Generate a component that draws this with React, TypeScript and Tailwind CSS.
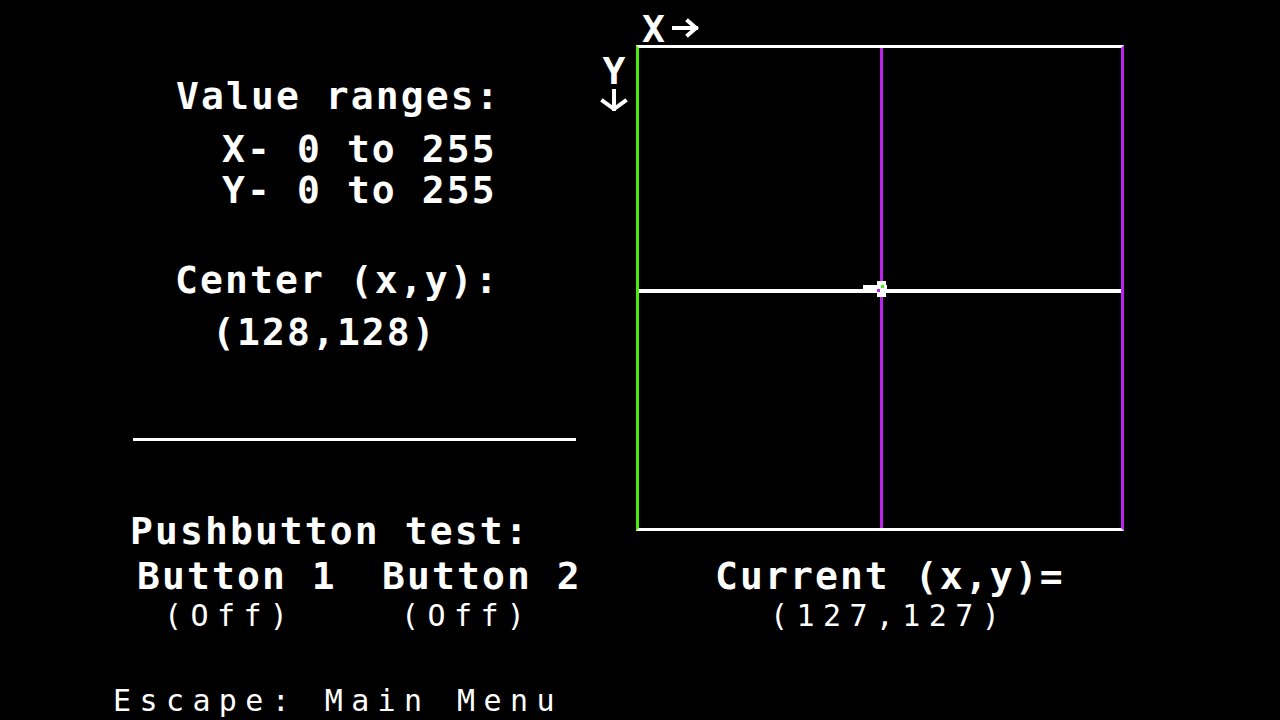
import React from "react";

const MONO = "font-['DejaVu_Sans_Mono','Liberation_Mono',monospace]";
const BOLD = `${MONO} font-bold text-[38px] leading-[36px] h-[36px] tracking-[2.1px] whitespace-pre text-white`;
const THIN = `${MONO} font-normal text-[30px] leading-[30px] h-[30px] tracking-[8.4px] whitespace-pre text-white`;

const GREEN = "border-l-[#44ee11]";

function RightArrow() {
  return (
    <svg width="28" height="20" viewBox="0 0 28 20" className="ml-[5px] mt-[7px]">
      <path d="M0 10 H24 M16 3 L24 10 L16 17" stroke="#fff" strokeWidth="4" fill="none" strokeLinecap="square" />
    </svg>
  );
}

function DownArrow() {
  return (
    <svg width="28" height="22" viewBox="0 0 28 22">
      <path d="M14 0 V20 M3 12 L14 20 L25 12" stroke="#fff" strokeWidth="4" fill="none" strokeLinecap="square" />
    </svg>
  );
}

function Graph() {
  return (
    <div className={`relative h-[486px] w-[488px] border-[3px] border-t-white border-b-white ${GREEN} border-r-[#bb22ee]`}>
      <div className="flex h-full flex-col">
        <div className="flex h-[241px]">
          <div className="w-[244px] border-r-[3px] border-[#bb22ee]" />
          <div className="flex-1" />
        </div>
        <div className="h-[4px] bg-white" />
        <div className="flex flex-1">
          <div className="w-[244px] border-r-[3px] border-[#bb22ee]" />
          <div className="flex-1" />
        </div>
      </div>
      {/* cursor */}
      <div className="absolute left-[224px] top-[237px] h-[8px] w-[24px] bg-white" />
      <div className="absolute left-[238px] top-[233px] h-[16px] w-[9px] bg-white" />
      <div className="absolute left-[242px] top-[237px] h-[3px] w-[3px] bg-[#44ee11]" />
      <div className="absolute left-[238px] top-[241px] h-[3px] w-[3px] bg-[#bb22ee]" />
    </div>
  );
}

export default function App() {
  return (
    <div className="flex h-[720px] w-[1280px] overflow-hidden bg-black">
      {/* left: ranges + pushbuttons */}
      <div className="flex w-[600px] shrink-0 flex-col pl-[110px] pt-[78px]">
        <div className={`${BOLD} ml-[66px]`}>Value ranges:</div>
        <div className={`${BOLD} ml-[112px] mt-[17px]`}>X- 0 to 255</div>
        <div className={`${BOLD} ml-[112px] mt-[5px]`}>Y- 0 to 255</div>
        <div className={`${BOLD} ml-[65px] mt-[54px]`}>Center (x,y):</div>
        <div className={`${BOLD} ml-[102px] mt-[16px]`}>(128,128)</div>
        <div className="ml-[23px] mt-[88px] h-[3px] w-[443px] bg-white" />
        <div className={`${BOLD} ml-[20px] mt-[72px]`}>Pushbutton test:</div>
        <div className="ml-[27px] mt-[9px] flex gap-[45px]">
          <span className={`${BOLD} w-[200px] shrink-0`}>Button 1</span>
          <span className={`${BOLD} shrink-0`}>Button 2</span>
        </div>
        <div className="ml-[54px] mt-[7px] flex">
          <span className={`${THIN} w-[237px] shrink-0`}>(Off)</span>
          <span className={`${THIN} shrink-0`}>(Off)</span>
        </div>
        <div className={`${THIN} ml-[3px] mt-[55px]`}>Escape: Main Menu</div>
      </div>

      {/* right: joystick plot */}
      <div className="flex flex-1 flex-col pt-[11px]">
        <div className="ml-[42px] flex h-[34px] items-start">
          <span className={BOLD}>X</span>
          <RightArrow />
        </div>
        <div className="flex">
          <div className="flex w-[28px] flex-col items-center pt-[8px]">
            <span className={`${BOLD} tracking-normal`}>Y</span>
            <DownArrow />
          </div>
          <div className="ml-[8px]">
            <Graph />
          </div>
        </div>
        <div className={`${BOLD} ml-[115px] mt-[27px]`}>Current (x,y)=</div>
        <div className={`${THIN} ml-[170px] mt-[7px]`}>(127,127)</div>
      </div>
    </div>
  );
}
